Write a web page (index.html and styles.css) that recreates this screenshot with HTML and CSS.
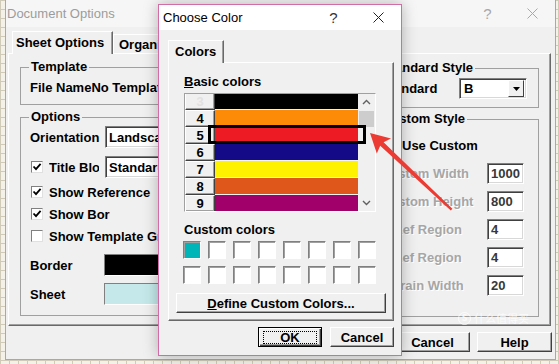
FILE: index.html
```html
<!DOCTYPE html>
<html lang="en">
<head>
    <meta charset="UTF-8">
    <meta name="viewport" content="width=device-width, initial-scale=1.0">
    <title>Choose Color</title>
    <link rel="stylesheet" href="styles.css">
</head>
<body>

    <!-- Document Options (inactive, behind) -->
    <div class="doc">
        <div class="titlebar doc-titlebar">
            <span class="title">Document Options</span>
            <span class="title-btn">?</span>
            <span class="title-btn">
                <svg width="11" height="11" viewBox="0 0 11 11"><path d="M0.5 0.5L10.5 10.5M10.5 0.5L0.5 10.5" stroke="#a8a8a8" stroke-width="1"/></svg>
            </span>
        </div>

        <div class="tabs doc-tabs">
            <div class="tab active sheet-tab">Sheet Options</div>
            <div class="tab">Organization</div>
        </div>

        <div class="panel doc-panel">
            <div class="left-col">
                <fieldset class="group template">
                    <legend>Template</legend>
                    <div class="file-row">File NameNo Template</div>
                </fieldset>

                <fieldset class="group options">
                    <legend>Options</legend>
                    <div class="field-row orient-row">
                        <span class="field-label">Orientation</span>
                        <div class="field combo">Landscape</div>
                    </div>
                    <div class="field-row title-row">
                        <label class="check title-check">
                            <span class="box"><svg width="10" height="10" viewBox="0 0 10 10"><path d="M1.5 4.5L4 7.2L8.6 1.8" fill="none" stroke="#000" stroke-width="1.8"/></svg></span>
                            <span class="clip title-clip">Title Block</span>
                        </label>
                        <div class="field combo">Standard</div>
                    </div>
                    <label class="check ref-row">
                        <span class="box"><svg width="10" height="10" viewBox="0 0 10 10"><path d="M1.5 4.5L4 7.2L8.6 1.8" fill="none" stroke="#000" stroke-width="1.8"/></svg></span>
                        <span class="clip ref-clip">Show Reference Grid</span>
                    </label>
                    <label class="check bor-row">
                        <span class="box"><svg width="10" height="10" viewBox="0 0 10 10"><path d="M1.5 4.5L4 7.2L8.6 1.8" fill="none" stroke="#000" stroke-width="1.8"/></svg></span>
                        <span class="clip bor-clip">Show Border</span>
                    </label>
                    <label class="check grid-row">
                        <span class="box"></span>
                        <span>Show Template Grid</span>
                    </label>
                    <div class="field-row border-row">
                        <span class="swatch-label">Border</span>
                        <span class="swatch black"></span>
                    </div>
                    <div class="field-row sheet-row">
                        <span class="swatch-label">Sheet</span>
                        <span class="swatch pale"></span>
                    </div>
                </fieldset>
            </div>

            <div class="right-col">
                <fieldset class="group standard">
                    <legend>Standard Style</legend>
                    <div class="field-row std-row">
                        <span>Standard</span>
                        <div class="field combo combo-b">
                            <span>B</span>
                            <span class="drop"><svg width="7" height="4" viewBox="0 0 7 4"><path d="M0 0H7L3.5 4Z" fill="#000"/></svg></span>
                        </div>
                    </div>
                </fieldset>

                <fieldset class="group custom">
                    <legend>Custom Style</legend>
                    <label class="check use-custom">
                        <span class="box"></span>
                        <span>Use Custom</span>
                    </label>
                    <div class="field-row size-row first">
                        <span class="dim">Custom Width</span>
                        <span class="field input">1000</span>
                    </div>
                    <div class="field-row size-row">
                        <span class="dim">Custom Height</span>
                        <span class="field input">800</span>
                    </div>
                    <div class="field-row size-row">
                        <span class="dim">X Ref Region</span>
                        <span class="field input">4</span>
                    </div>
                    <div class="field-row size-row">
                        <span class="dim">Y Ref Region</span>
                        <span class="field input">4</span>
                    </div>
                    <div class="field-row size-row">
                        <span class="dim">Terrain Width</span>
                        <span class="field input">20</span>
                    </div>
                </fieldset>
            </div>
        </div>

        <div class="buttons doc-buttons">
            <button class="btn">OK</button>
            <button class="btn">Cancel</button>
            <button class="btn">Help</button>
        </div>
    </div>

    <!-- Choose Color (active, on top) -->
    <div class="chooser">
        <div class="titlebar chooser-titlebar">
            <span class="title">Choose Color</span>
            <span class="title-btn">?</span>
            <span class="title-btn">
                <svg width="11" height="11" viewBox="0 0 11 11"><path d="M0.5 0.5L10.5 10.5M10.5 0.5L0.5 10.5" stroke="#222" stroke-width="1"/></svg>
            </span>
        </div>

        <div class="tabs chooser-tabs">
            <div class="tab active colors-tab">Colors</div>
        </div>

        <div class="panel chooser-panel">
            <div class="section-label"><u>B</u>asic colors</div>

            <div class="color-list">
                <div class="list-rows">
                    <div class="list-row"><span class="num faded">3</span><span class="bar c-black"></span></div>
                    <div class="list-row"><span class="num">4</span><span class="bar c-orange"></span></div>
                    <div class="list-row"><span class="num">5</span><span class="bar c-red"></span></div>
                    <div class="list-row"><span class="num">6</span><span class="bar c-navy"></span></div>
                    <div class="list-row"><span class="num">7</span><span class="bar c-yellow"></span></div>
                    <div class="list-row"><span class="num">8</span><span class="bar c-rust"></span></div>
                    <div class="list-row"><span class="num">9</span><span class="bar c-plum"></span></div>
                </div>
                <div class="scrollbar">
                    <span class="sb-btn"><svg width="9" height="6" viewBox="0 0 9 6"><path d="M1 5L4.5 1.5L8 5" fill="none" stroke="#606060" stroke-width="1.4"/></svg></span>
                    <span class="sb-thumb"></span>
                    <span class="sb-track"></span>
                    <span class="sb-btn"><svg width="9" height="6" viewBox="0 0 9 6"><path d="M1 1L4.5 4.5L8 1" fill="none" stroke="#606060" stroke-width="1.4"/></svg></span>
                </div>
                <!-- selected row -->
                <div class="selection"></div>
            </div>

            <div class="section-label custom-label">Custom colors</div>
            <div class="custom-grid">
                <span class="cell teal"></span>
                <span class="cell"></span>
                <span class="cell"></span>
                <span class="cell"></span>
                <span class="cell"></span>
                <span class="cell"></span>
                <span class="cell"></span>
                <span class="cell"></span>
                <span class="cell"></span>
                <span class="cell"></span>
                <span class="cell"></span>
                <span class="cell"></span>
                <span class="cell"></span>
                <span class="cell"></span>
                <span class="cell"></span>
                <span class="cell"></span>
            </div>

            <button class="btn define-btn"><span><u>D</u>efine Custom Colors...</span></button>
        </div>

        <div class="buttons chooser-buttons">
            <button class="btn ok-btn"><span class="focus">OK</span></button>
            <button class="btn">Cancel</button>
        </div>
    </div>

    <!-- Annotation arrow -->
    <svg class="arrow" width="559" height="364" viewBox="0 0 559 364">
        <polygon points="370,133 391,138.5 383.6,142.3 452.4,208.8 450.8,210.4 380.2,145.8 376.8,153.4" fill="#ec3b33"/>
    </svg>

    <span class="watermark"><span class="wm-logo">S</span>什么值得买</span>

</body>
</html>
```

FILE: styles.css
```css
* {
    box-sizing: border-box;
}

body {
    margin: 0;
    width: 559px;
    height: 364px;
    overflow: hidden;
    position: relative;
    font-family: "Liberation Sans", Arial, sans-serif;
    font-size: 13px;
    color: #000;
    background-color: #f3f1e8;
    background-image:
        repeating-linear-gradient(to right, #cfcbb8 0 1px, transparent 1px 9px),
        repeating-linear-gradient(to bottom, #cfcbb8 0 1px, transparent 1px 9px);
}

button {
    font-family: inherit;
}

/* ---------- shared window parts ---------- */

.titlebar {
    display: flex;
    align-items: center;
}

.titlebar .title {
    flex: 1;
}

.title-btn {
    width: 45px;
    display: flex;
    justify-content: center;
    align-items: center;
    font-size: 15px;
}

.tabs {
    display: flex;
    align-items: flex-end;
}

.tab {
    height: 19px;
    padding: 0 5px;
    display: flex;
    align-items: center;
    font-weight: bold;
    background: #f0f0f0;
    border-top: 1px solid #fff;
    border-left: 1px solid #fff;
    border-right: 1px solid #696969;
    box-shadow: inset -1px 0 0 #a0a0a0;
}

.tab.active {
    position: relative;
    height: 23px;
    margin-bottom: -1px;
    padding-bottom: 2px;
}

.panel {
    background: #f0f0f0;
    border: 1px solid;
    border-color: #fff #696969 #696969 #fff;
    box-shadow: inset -1px -1px 0 #a0a0a0;
}

.buttons {
    display: flex;
    justify-content: flex-end;
}

.btn {
    height: 20px;
    padding: 0;
    font-size: 13px;
    font-weight: bold;
    color: #000;
    background: #f0f0f0;
    border: 1px solid;
    border-color: #fff #404040 #404040 #fff;
    box-shadow: inset -1px -1px 0 #a0a0a0;
}

.field {
    background: #fff;
    border: 1px solid;
    border-color: #808080 #fff #fff #808080;
    box-shadow: inset 1px 1px 0 #404040, inset -1px -1px 0 #d8d8d8;
}

/* ---------- Document Options ---------- */

.doc {
    margin-left: 5px;
    width: 551px;
    height: 360px;
    background: #f0f0f0;
    border: 1px solid #a8a8a8;
    border-top: 0;
}

.doc-titlebar {
    height: 27px;
    padding-left: 1px;
    color: #9c9c9c;
    background: #f6f6f6;
}

.doc-titlebar .title-btn {
    color: #a8a8a8;
}

.doc-tabs {
    height: 26px;
    padding-left: 6px;
}

.sheet-tab {
    width: 101px;
    padding-left: 3px;
}

.doc-panel {
    margin-left: 2px;
    width: 543px;
    height: 273px;
    padding: 5px 11px 0 11px;
    display: flex;
    gap: 11px;
    align-items: flex-start;
}

.left-col {
    width: 340px;
    flex: none;
}

.right-col {
    flex: 1;
    margin-top: 1px;
}

.group {
    margin: 0;
    min-width: 0;
    padding: 0 9px 8px 9px;
    border: 1px solid #a0a0a0;
    font-weight: bold;
}

.group legend {
    padding: 0 2px;
    margin-left: -1px;
    line-height: 16px;
}

.file-row {
    margin-top: 5px;
    height: 16px;
    line-height: 16px;
    white-space: nowrap;
}

.options {
    margin-top: 4px;
    padding-bottom: 10px;
}

.field-row {
    display: flex;
    align-items: center;
    white-space: nowrap;
}

.field-label {
    width: 75px;
}

.combo {
    height: 22px;
    width: 160px;
    padding-left: 3px;
    display: flex;
    align-items: center;
}

.orient-row {
    margin-top: 1px;
    height: 22px;
}

.title-row {
    margin-top: 8px;
    height: 22px;
}

.check {
    display: flex;
    align-items: center;
    height: 20px;
    white-space: nowrap;
}

.box {
    width: 12px;
    height: 12px;
    margin: 0 6px 0 1px;
    flex: none;
    display: flex;
    align-items: center;
    justify-content: center;
    background: #fff;
    border: 1px solid;
    border-color: #808080 #e0e0e0 #e0e0e0 #808080;
}

.clip {
    overflow: hidden;
}

.title-check {
    width: 75px;
}

.title-clip {
    width: 50px;
}

.ref-row {
    margin-top: 4px;
}

.ref-clip {
    width: 104px;
}

.bor-row {
    margin-top: 2px;
}

.bor-clip {
    width: 61px;
}

.grid-row {
    margin-top: 2px;
}

.swatch-label {
    width: 74px;
}

.swatch {
    width: 160px;
    height: 22px;
    border: 1px solid;
    border-color: #808080 #fff #fff #808080;
}

.swatch.black {
    background: #000;
}

.swatch.pale {
    background: #c5e9ea;
}

.border-row {
    margin-top: 8px;
    height: 22px;
}

.sheet-row {
    margin-top: 7px;
    height: 22px;
}

.standard {
    padding-right: 11px;
}

.std-row {
    margin-top: 2px;
    height: 21px;
    justify-content: space-between;
}

.combo-b {
    width: 68px;
    height: 21px;
    justify-content: space-between;
    padding: 0 2px 0 4px;
}

.drop {
    width: 16px;
    height: 17px;
    display: flex;
    align-items: center;
    justify-content: center;
    background: #f0f0f0;
    border: 1px solid;
    border-color: #fff #404040 #404040 #fff;
}

.custom {
    margin-top: 3px;
    padding-right: 14px;
    padding-bottom: 20px;
}

.use-custom {
    margin-top: 8px;
}

.use-custom .box {
    margin: 0 6px 0 3px;
}

.size-row {
    margin-top: 7px;
    height: 21px;
    justify-content: space-between;
}

.size-row.first {
    margin-top: 8px;
}

.dim {
    color: #a6a6a6;
    text-shadow: 1px 1px 0 #fff;
}

.input {
    width: 37px;
    height: 21px;
    padding-left: 3px;
    line-height: 19px;
    color: #383838;
}

.doc-buttons {
    margin-top: 6px;
    padding-right: 3px;
    gap: 7px;
}

.doc-buttons .btn {
    width: 75px;
}

/* ---------- Choose Color ---------- */

.chooser {
    position: absolute;
    left: 158px;
    top: 4px;
    width: 244px;
    height: 352px;
    background: #f0f0f0;
    border: 1px solid #d26ca6;
    box-shadow: 0 0 14px rgba(0, 0, 0, 0.28);
}

.chooser-titlebar {
    height: 25px;
    padding-left: 4px;
    background: #fff;
}

.chooser-titlebar .title-btn {
    color: #333;
}

.chooser-tabs {
    height: 32px;
    padding-left: 9px;
}

.colors-tab {
    width: 56px;
    padding-left: 6px;
}

.chooser-panel {
    margin-left: 9px;
    width: 226px;
    height: 259px;
    padding: 11px 0 0 15px;
}

.section-label {
    font-weight: bold;
    line-height: 16px;
}

.color-list {
    position: relative;
    margin-top: 3px;
    width: 192px;
    height: 119px;
    display: flex;
    overflow: hidden;
    background: #fff;
    border: 1px solid;
    border-color: #a0a0a0 #fff #fff #a0a0a0;
}

.list-rows {
    width: 173px;
    margin-top: -1px;
}

.list-row {
    display: flex;
    height: 17px;
}

.num {
    width: 30px;
    height: 17px;
    text-align: center;
    line-height: 15px;
    font-weight: bold;
    background: #f0f0f0;
    border: 1px solid;
    border-color: #fff #404040 #404040 #fff;
    box-shadow: inset -1px -1px 0 #a0a0a0;
}

.num.faded {
    color: #e2e2e2;
}

.bar {
    flex: 1;
    border-bottom: 1px solid #f3f3f3;
}

.c-black { background: #000; }
.c-orange { background: #fd8b08; }
.c-red { background: #ec1b24; }
.c-navy { background: #140a88; }
.c-yellow { background: #fff200; }
.c-rust { background: #e0571b; }
.c-plum { background: #a1006b; }

.scrollbar {
    width: 17px;
    display: flex;
    flex-direction: column;
    background: #f0f0f0;
}

.sb-btn {
    height: 16px;
    display: flex;
    align-items: center;
    justify-content: center;
}

.sb-thumb {
    height: 16px;
    margin: 1px 1px 0 1px;
    background: #cdcdcd;
}

.sb-track {
    flex: 1;
}

.selection {
    position: absolute;
    left: 23px;
    top: 31px;
    width: 158px;
    height: 19px;
    border: 3px solid #000;
}

.custom-label {
    margin-top: 10px;
}

.custom-grid {
    margin: 3px 0 0 -1px;
    display: grid;
    grid-template-columns: repeat(8, 18px);
    grid-auto-rows: 18px;
    gap: 7px;
}

.cell {
    background: #fff;
    border: 1px solid;
    border-color: #808080 #fff #fff #808080;
    box-shadow: inset 1px 1px 0 #a0a0a0;
}

.cell.teal {
    background: #00b5b8;
}

.define-btn {
    display: block;
    margin: 9px 0 0 -8px;
    width: 210px;
}

.chooser-buttons {
    margin-top: 6px;
    padding-right: 7px;
    gap: 8px;
}

.chooser-buttons .btn {
    width: 64px;
}

.ok-btn {
    display: flex;
    padding: 3px 4px 2px 4px;
    border-color: #000;
    box-shadow: inset 1px 1px 0 #fff, inset -1px -1px 0 #404040, inset -2px -2px 0 #a0a0a0;
}

.focus {
    flex: 1;
    display: flex;
    align-items: center;
    justify-content: center;
    border: 1px dotted #000;
}

/* ---------- overlays ---------- */

.arrow {
    position: absolute;
    left: 0;
    top: 0;
    pointer-events: none;
}

.watermark {
    position: absolute;
    left: 458px;
    top: 311px;
    display: flex;
    align-items: center;
    gap: 3px;
    font-family: "Noto Sans CJK SC", sans-serif;
    font-size: 11px;
    line-height: 14px;
    color: rgba(255, 255, 255, 0.75);
}

.wm-logo {
    width: 13px;
    height: 13px;
    border: 1.5px solid rgba(255, 255, 255, 0.75);
    border-radius: 50%;
    font-size: 9px;
    line-height: 10px;
    text-align: center;
    font-weight: bold;
}
```
